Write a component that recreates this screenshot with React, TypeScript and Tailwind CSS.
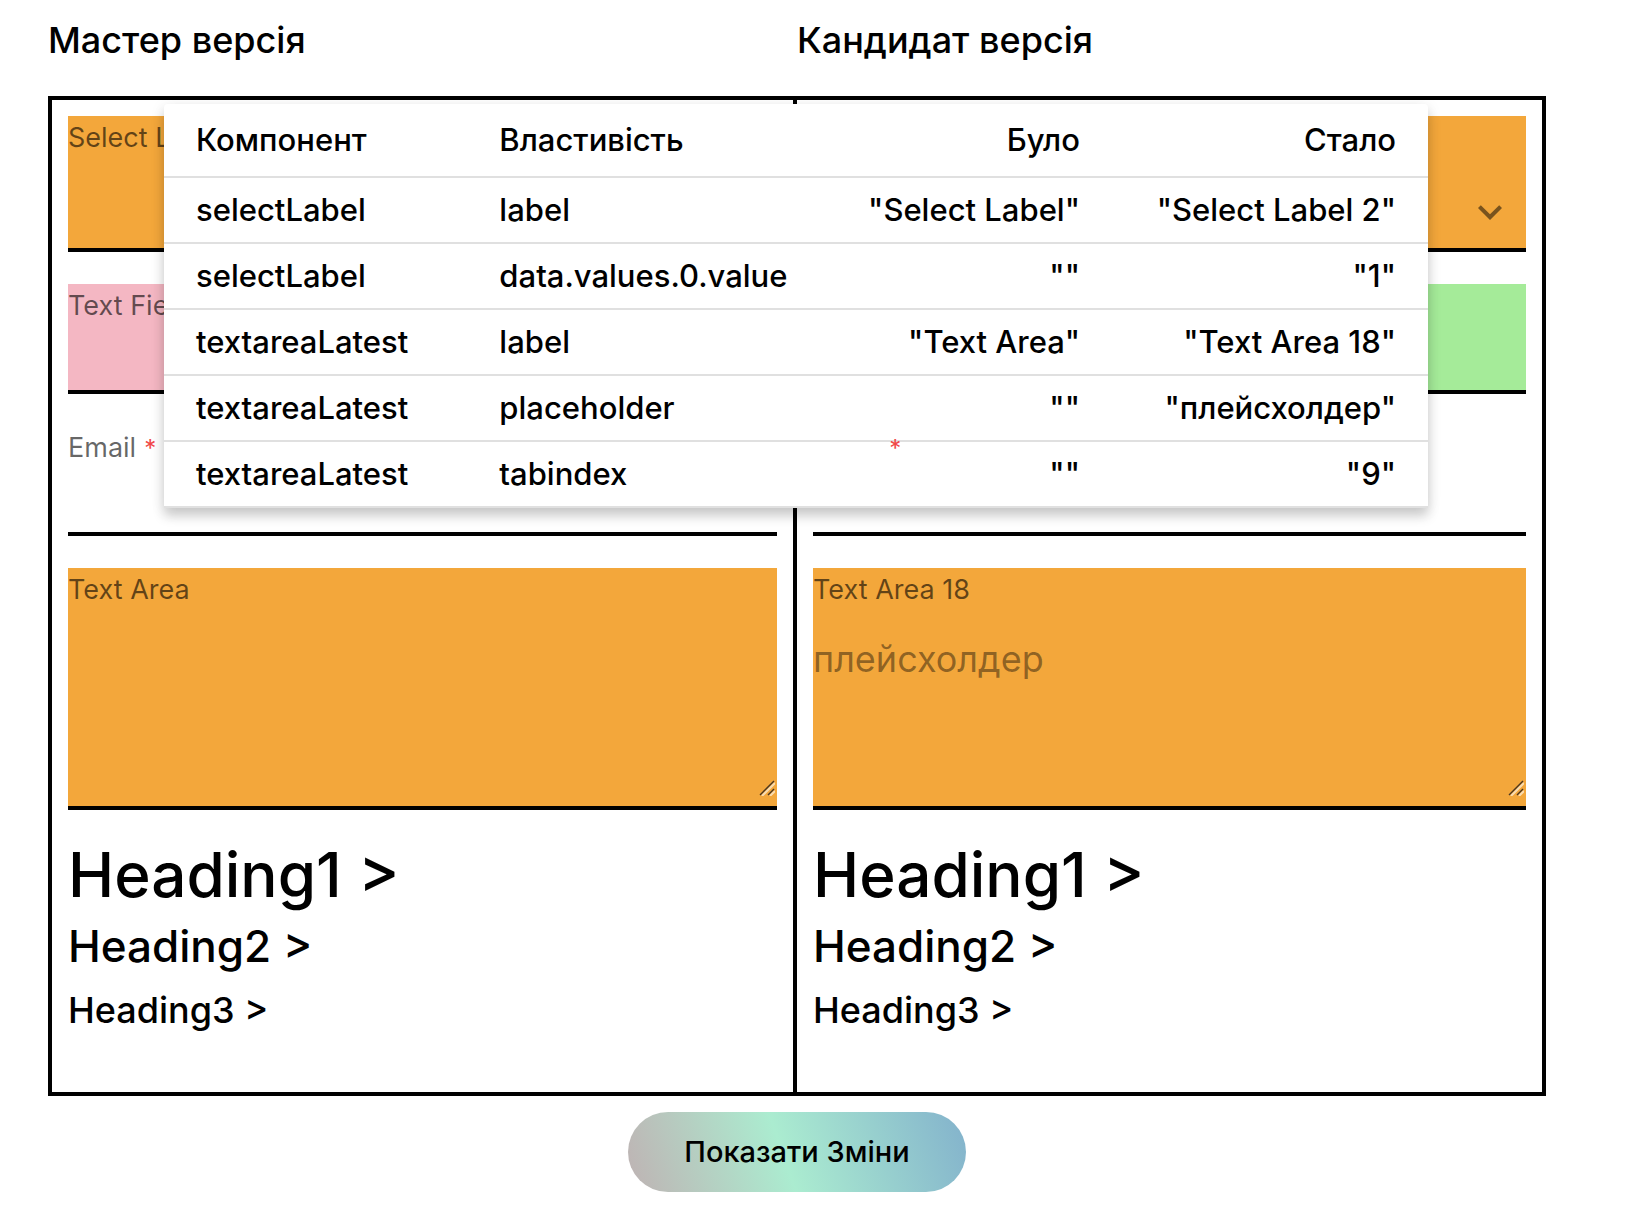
import React, { useId } from "react";

type Tone = "changed" | "removed" | "added" | "none";

const toneClass: Record<Tone, string> = {
  changed: "bg-[#f3a73b]",
  removed: "bg-[#f4b7c3]",
  added: "bg-[#a5eb99]",
  none: "",
};

function Field({
  id,
  label,
  tone,
  required,
  children,
}: {
  id: string;
  label: string;
  tone: Tone;
  required?: boolean;
  children: React.ReactNode;
}) {
  return (
    <div className={`relative flex flex-col border-b-4 border-black pt-1 ${toneClass[tone]}`}>
      <label htmlFor={id} className="text-[27px] leading-[36px] text-black/60">
        {label}
        {required && <span className="relative z-20 ml-2 text-2xl leading-none text-[#f04848]">*</span>}
      </label>
      {children}
    </div>
  );
}

function ResizeGrip() {
  return (
    <svg className="pointer-events-none absolute right-[2px] bottom-[10px] size-4" viewBox="0 0 16 16" fill="none" aria-hidden="true">
      <path d="M3 16 16 3M11 16l5-5" stroke="#f9dcb0" strokeWidth="2" />
      <path d="M1 15 15 1M9 15l6-6" stroke="#4a3620" strokeWidth="1.4" />
    </svg>
  );
}

function FormPreview({
  selectLabel,
  textTone,
  areaLabel,
  placeholder,
}: {
  selectLabel: string;
  textTone: Tone;
  areaLabel: string;
  placeholder?: string;
}) {
  const id = useId();
  return (
    <div className="flex flex-col gap-8">
      <Field id={`${id}-select`} label={selectLabel} tone="changed">
        <select id={`${id}-select`} className="h-[92px] w-full appearance-none bg-transparent text-4xl outline-none" />
        <svg
          className="pointer-events-none absolute right-3 bottom-3 size-12 fill-black/50"
          viewBox="0 0 24 24"
          aria-hidden="true"
        >
          <path d="M16.59 8.59 12 13.17 7.41 8.59 6 10l6 6 6-6z" />
        </svg>
      </Field>
      <Field id={`${id}-text`} label="Text Field" tone={textTone}>
        <input id={`${id}-text`} type="text" className="h-[66px] w-full bg-transparent text-4xl outline-none" />
      </Field>
      <Field id={`${id}-email`} label="Email" tone="none" required>
        <input id={`${id}-email`} type="email" className="h-[66px] w-full bg-transparent text-4xl outline-none" />
      </Field>
      <Field id={`${id}-area`} label={areaLabel} tone="changed">
        <textarea
          id={`${id}-area`}
          placeholder={placeholder}
          className="mt-7 block h-[170px] w-full resize-none bg-transparent text-4xl leading-[46px] outline-none placeholder:text-black/42"
        />
        <ResizeGrip />
      </Field>
      <div className="flex flex-col gap-2 pb-10 font-medium">
        <h1 className="text-[62px] leading-[66px]">Heading1 &gt;</h1>
        <h2 className="text-[44px] leading-[60px]">Heading2 &gt;</h2>
        <h3 className="text-4xl leading-[52px]">Heading3 &gt;</h3>
      </div>
    </div>
  );
}

const changes = [
  ["selectLabel", "label", '"Select Label"', '"Select Label 2"'],
  ["selectLabel", "data.values.0.value", '""', '"1"'],
  ["textareaLatest", "label", '"Text Area"', '"Text Area 18"'],
  ["textareaLatest", "placeholder", '""', '"плейсхолдер"'],
  ["textareaLatest", "tabindex", '""', '"9"'],
];

function ChangesTable() {
  return (
    <div className="absolute top-2 right-[118px] left-[116px] z-10 rounded-t-[4px] bg-white shadow-[0_8px_12px_0_rgba(0,0,0,0.18),0_2px_16px_0_rgba(0,0,0,0.08)]">
      <table className="w-full table-fixed border-separate border-spacing-0 text-[31px] leading-[40px] font-medium">
        <colgroup>
          <col className="w-[24%]" />
          <col className="w-[28%]" />
          <col className="w-[23%]" />
          <col className="w-[25%]" />
        </colgroup>
        <thead>
          <tr>
            {["Компонент", "Властивість", "Було", "Стало"].map((name, i) => (
              <th
                key={name}
                scope="col"
                className={`border-b-2 border-[#e0e0e0] px-8 py-4 font-medium ${i > 1 ? "text-right" : "text-left"}`}
              >
                {name}
              </th>
            ))}
          </tr>
        </thead>
        <tbody>
          {changes.map((row) => (
            <tr key={row[0] + row[1]}>
              {row.map((cell, i) => (
                <td
                  key={i}
                  className={`border-b-2 border-[#e0e0e0] px-8 py-3 whitespace-nowrap ${i > 1 ? "text-right" : "text-left"}`}
                >
                  {cell}
                </td>
              ))}
            </tr>
          ))}
        </tbody>
      </table>
    </div>
  );
}

export default function App() {
  return (
    <main className="min-h-screen bg-white pr-[86px] pb-6 pl-12 font-['Inter','Noto_Sans',sans-serif] text-black">
      <div className="grid grid-cols-2 pt-4 pb-8 text-4xl leading-[48px] font-medium">
        <h2>Мастер версія</h2>
        <h2>Кандидат версія</h2>
      </div>
      <div className="relative grid grid-cols-2">
        <section className="border-4 border-black p-4">
          <FormPreview selectLabel="Select Label" textTone="removed" areaLabel="Text Area" />
        </section>
        <section className="border-4 border-l-0 border-black p-4">
          <FormPreview selectLabel="Select Label 2" textTone="added" areaLabel="Text Area 18" placeholder="плейсхолдер" />
        </section>
        <ChangesTable />
      </div>
      <div className="mt-4 flex justify-center">
        <button
          type="button"
          className="h-20 rounded-full bg-[linear-gradient(71deg,#bfb2b3_0%,#abecd0_46%,#83b2cc_100%)] px-14 text-[29px] font-medium"
        >
          Показати Зміни
        </button>
      </div>
    </main>
  );
}
